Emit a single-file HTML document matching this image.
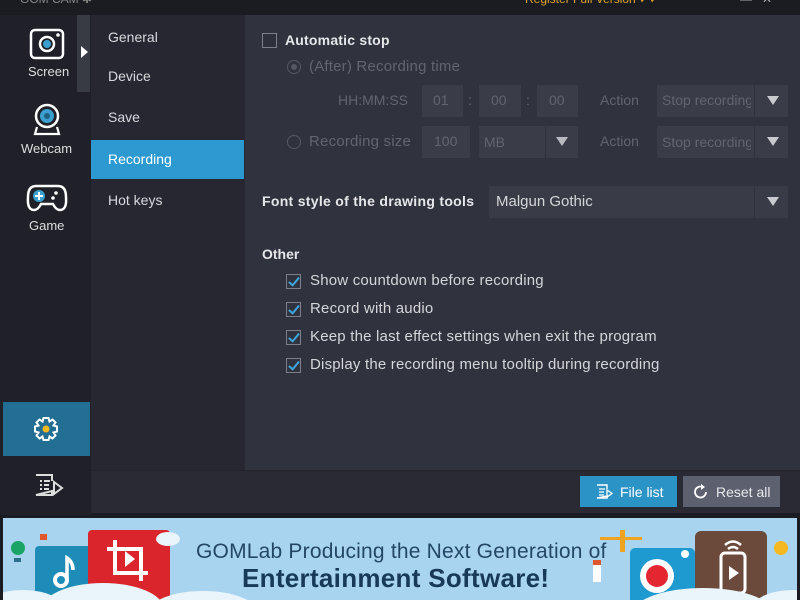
<!DOCTYPE html>
<html style="overflow:hidden"><head><meta charset="utf-8"><style>
*{margin:0;padding:0;box-sizing:border-box}
html,body{width:800px;height:600px;overflow:hidden}
body{background:#1b1c23;font-family:"Liberation Sans",sans-serif;position:relative}
.a{position:absolute}
.t{color:#e6e7ea;font-size:14px;white-space:nowrap}
.dim{color:#62656f}
.box{background:#3a3c47;position:absolute}
.cb{position:absolute;width:15px;height:15px;border:1.5px solid #7d808a;background:#2e303b}
.ck{position:absolute;width:15px;height:15px;border:1.5px solid #7d808a}
.ck::after{content:"";position:absolute;left:4px;top:0px;width:4px;height:9px;border:solid #3da6dd;border-width:0 2.5px 2.5px 0;transform:rotate(40deg)}
.tri{position:absolute;width:0;height:0;border-left:6px solid transparent;border-right:6px solid transparent;border-top:9px solid #c8cad0}
.sep{position:absolute;width:1px;background:#30323c}
.opt{font-size:15px;letter-spacing:0.2px;color:#d5d6da}
</style></head><body>
<div class="a" style="left:0;top:0;width:800px;height:15px;background:#1b1c22;overflow:hidden">
<div class="a t" style="left:20px;top:-8px;font-size:12px;color:#888">GOM CAM ✱</div>
<div class="a t" style="left:525px;top:-8px;font-size:12px;color:#e0a528">Register Full Version ✓✓</div>
<div class="a t" style="left:740px;top:-8px;font-size:12px;color:#aaa">—&nbsp;&nbsp;&nbsp;✕</div>
</div>
<div class="a" style="left:0;top:15px;width:91px;height:500px;background:#1f2028"></div>
<div class="a" style="left:77px;top:15px;width:13px;height:77px;background:#383a44"></div>
<div class="a" style="left:81px;top:46px;width:0;height:0;border-top:6px solid transparent;border-bottom:6px solid transparent;border-left:7px solid #fff"></div>
<svg class="a" style="left:29px;top:28px" width="36" height="32"><rect x="2" y="2" width="32" height="28" rx="4" fill="none" stroke="#fff" stroke-width="2.5"/><circle cx="18" cy="16" r="7" fill="none" stroke="#fff" stroke-width="2.5"/><circle cx="18" cy="16" r="4" fill="#3ba0d0"/><circle cx="29" cy="7" r="1.8" fill="#fff"/></svg>
<div class="a t" style="left:28px;top:64px;font-size:13px;color:#ddd">Screen</div>
<svg class="a" style="left:31px;top:103px" width="32" height="34"><circle cx="16" cy="13" r="11" fill="none" stroke="#fff" stroke-width="2.5"/><circle cx="16" cy="13" r="7" fill="#3ba0d0"/><circle cx="16" cy="13" r="3" fill="#1f5f80"/><path d="M6 24 L4 31 H28 L26 24" fill="none" stroke="#fff" stroke-width="2.2"/></svg>
<div class="a t" style="left:21px;top:141px;font-size:13px;color:#ddd">Webcam</div>
<svg class="a" style="left:26px;top:183px" width="42" height="30"><path d="M10 3 H32 Q40 3 40 14 Q41 27 34 27 Q30 27 27 21 H15 Q12 27 8 27 Q1 27 2 14 Q2 3 10 3Z" fill="none" stroke="#fff" stroke-width="2.5"/><circle cx="13" cy="13" r="6" fill="#3ba0d0"/><path d="M13 9v8M9 13h8" stroke="#fff" stroke-width="2"/><circle cx="30" cy="10" r="1.8" fill="#fff"/><circle cx="27" cy="15" r="1.8" fill="#fff"/></svg>
<div class="a t" style="left:29px;top:218px;font-size:13px;color:#ddd">Game</div>
<div class="a" style="left:3px;top:402px;width:87px;height:54px;background:#236f94"></div>
<svg class="a" style="left:33px;top:416px" width="26" height="26"><g transform="translate(13 13)" fill="none" stroke="#fff" stroke-width="2"><path d="M-2.5 -11 H2.5 L3.5 -7.5 L6.5 -9.5 L9.5 -6.5 L7.5 -3.5 L11 -2.5 V2.5 L7.5 3.5 L9.5 6.5 L6.5 9.5 L3.5 7.5 L2.5 11 H-2.5 L-3.5 7.5 L-6.5 9.5 L-9.5 6.5 L-7.5 3.5 L-11 2.5 V-2.5 L-7.5 -3.5 L-9.5 -6.5 L-6.5 -9.5 L-3.5 -7.5Z"/></g><circle cx="13" cy="13" r="3.5" fill="#f5b820"/></svg>
<svg class="a" style="left:34px;top:473px" width="30" height="24"><path d="M2 2 H18 V8 M18 18 V22 H2Z" fill="none" stroke="#ddd" stroke-width="2"/><path d="M6 8h2M10 8h6M6 12h2M10 12h5M6 16h2M10 16h5" stroke="#ddd" stroke-width="2"/><path d="M20 9 L28 15 L20 21Z" fill="none" stroke="#ddd" stroke-width="2"/></svg>
<div class="a" style="left:91px;top:15px;width:154px;height:455px;background:#262731"></div>
<div class="a t" style="left:108px;top:29px;color:#d8d9dc">General</div>
<div class="a t" style="left:108px;top:68px;color:#d8d9dc">Device</div>
<div class="a t" style="left:108px;top:109px;color:#d8d9dc">Save</div>
<div class="a" style="left:91px;top:140px;width:153px;height:39px;background:#2c9ad0"></div>
<div class="a t" style="left:108px;top:151px;color:#fff">Recording</div>
<div class="a t" style="left:108px;top:192px;color:#d8d9dc">Hot keys</div>
<div class="a" style="left:245px;top:15px;width:555px;height:455px;background:#30323e"></div>
<div class="a" style="left:91px;top:470px;width:709px;height:43px;background:#292a34;border-top:1px solid #22232b"></div>
<div class="cb" style="left:262px;top:33px"></div>
<div class="a t" style="left:285px;top:32px;font-weight:bold;font-size:14px;letter-spacing:0.2px">Automatic stop</div>
<div class="a" style="left:287px;top:60px;width:14px;height:14px;border:1.5px solid #555864;border-radius:50%"><div style="margin:2.5px;width:6px;height:6px;border-radius:50%;background:#555864"></div></div>
<div class="a t dim opt" style="left:309px;top:58px;color:#62656f">(After) Recording time</div>
<div class="a t dim" style="left:338px;top:92px">HH:MM:SS</div>
<div class="box" style="left:422px;top:85px;width:41px;height:32px"></div><div class="a t dim" style="left:433px;top:92px">01</div>
<div class="a t dim" style="left:468px;top:92px">:</div>
<div class="box" style="left:479px;top:85px;width:42px;height:32px"></div><div class="a t dim" style="left:491px;top:92px">00</div>
<div class="a t dim" style="left:526px;top:92px">:</div>
<div class="box" style="left:537px;top:85px;width:41px;height:32px"></div><div class="a t dim" style="left:549px;top:92px">00</div>
<div class="a t dim" style="left:600px;top:92px">Action</div>
<div class="box" style="left:657px;top:85px;width:131px;height:32px"></div><div class="sep" style="left:754px;top:85px;height:32px"></div>
<div class="a t dim" style="left:662px;top:92px;width:89px;overflow:hidden">Stop recording</div>
<div class="tri" style="left:767px;top:96px"></div>
<div class="a" style="left:287px;top:135px;width:14px;height:14px;border:1.5px solid #555864;border-radius:50%"></div>
<div class="a t dim opt" style="left:309px;top:133px;color:#62656f">Recording size</div>
<div class="box" style="left:422px;top:126px;width:48px;height:32px"></div><div class="a t dim" style="left:434px;top:133px">100</div>
<div class="box" style="left:479px;top:126px;width:99px;height:32px"></div><div class="sep" style="left:545px;top:126px;height:32px"></div><div class="a t dim" style="left:484px;top:134px">MB</div><div class="tri" style="left:556px;top:137px;border-top-color:#b8bac0"></div>
<div class="a t dim" style="left:600px;top:133px">Action</div>
<div class="box" style="left:657px;top:126px;width:131px;height:32px"></div><div class="sep" style="left:754px;top:126px;height:32px"></div>
<div class="a t dim" style="left:662px;top:134px;width:89px;overflow:hidden">Stop recording</div>
<div class="tri" style="left:767px;top:137px"></div>
<div class="a t" style="left:262px;top:193px;font-weight:bold;letter-spacing:0.3px">Font style of the drawing tools</div>
<div class="a" style="left:489px;top:186px;width:299px;height:32px;background:#393b46"></div><div class="sep" style="left:754px;top:186px;height:32px"></div>
<div class="a t" style="left:496px;top:193px;color:#d5d6da;font-size:15px">Malgun Gothic</div>
<div class="tri" style="left:767px;top:197px"></div>
<div class="a t" style="left:262px;top:246px;font-weight:bold">Other</div>
<div class="ck" style="left:286px;top:274px"></div><div class="a t opt" style="left:310px;top:272px">Show countdown before recording</div>
<div class="ck" style="left:286px;top:302px"></div><div class="a t opt" style="left:310px;top:300px">Record with audio</div>
<div class="ck" style="left:286px;top:330px"></div><div class="a t opt" style="left:310px;top:328px">Keep the last effect settings when exit the program</div>
<div class="ck" style="left:286px;top:358px"></div><div class="a t opt" style="left:310px;top:356px">Display the recording menu tooltip during recording</div>
<div class="a" style="left:580px;top:476px;width:97px;height:31px;background:#2c93c6"></div>
<svg class="a" style="left:596px;top:484px" width="18" height="16"><path d="M1 1H11V5M11 12V14H1Z" fill="none" stroke="#fff" stroke-width="1.4"/><path d="M3 5h6M3 8h5M3 11h5" stroke="#fff" stroke-width="1.3"/><path d="M11 6L16 9.5L11 13Z" fill="none" stroke="#fff" stroke-width="1.3"/></svg>
<div class="a t" style="left:620px;top:484px;color:#fff">File list</div>
<div class="a" style="left:683px;top:476px;width:97px;height:31px;background:#5d606e"></div>
<svg class="a" style="left:693px;top:484px" width="16" height="16"><path d="M13 8A5.5 5.5 0 1 1 9 2.7" fill="none" stroke="#fff" stroke-width="1.8"/><path d="M8 0L12 3L8 6Z" fill="#fff"/></svg>
<div class="a t" style="left:716px;top:484px;color:#e8e8ea">Reset all</div>
<div class="a" style="left:3px;top:518px;width:794px;height:82px;background:#a9d4ef;overflow:hidden">
<svg class="a" style="left:0;top:0" width="794" height="82">
<circle cx="15" cy="30" r="7" fill="#1aa566"/><rect x="11" y="40" width="7" height="4" fill="#2a6f8a"/><rect x="37" y="16" width="7" height="6" fill="#e0572d"/>
<rect x="32" y="28" width="60" height="60" rx="4" fill="#1d8db8"/><circle cx="58" cy="62" r="6" fill="none" stroke="#fff" stroke-width="4"/><path d="M64 62V40Q70 44 70 52" fill="none" stroke="#fff" stroke-width="3.5"/>
<rect x="85" y="12" width="82" height="80" rx="4" fill="#d9252b"/><path d="M112 22V55H145M104 31H138V63" fill="none" stroke="#fff" stroke-width="4"/><path d="M122 33L132 41L122 49Z" fill="#fff"/>
<ellipse cx="165" cy="21" rx="12" ry="7" fill="#e9f4fb"/>
<ellipse cx="100" cy="90" rx="60" ry="25" fill="#e9f4fb"/><ellipse cx="200" cy="95" rx="55" ry="22" fill="#e9f4fb"/><ellipse cx="20" cy="90" rx="40" ry="18" fill="#e9f4fb"/>
<rect x="597" y="19" width="42" height="3" fill="#f0a31e"/><rect x="617" y="12" width="5" height="22" fill="#f0a31e"/>
<rect x="627" y="30" width="65" height="62" rx="5" fill="#1e9ad0"/><circle cx="654" cy="58" r="17" fill="#fff"/><circle cx="654" cy="58" r="11" fill="#e32630"/><circle cx="682" cy="36" r="4" fill="#fff"/>
<rect x="692" y="13" width="72" height="80" rx="6" fill="#6b4a3c"/><rect x="718" y="35" width="24" height="40" rx="4" fill="none" stroke="#fff" stroke-width="3"/><path d="M726 48L736 55L726 62Z" fill="#fff"/><path d="M722 27Q730 20 738 27M725 31Q730 27 735 31" fill="none" stroke="#fff" stroke-width="2.5"/>
<circle cx="778" cy="30" r="7" fill="#f5b820"/>
<rect x="590" y="44" width="8" height="20" fill="#fff"/><rect x="590" y="42" width="8" height="5" fill="#e0572d"/>
<ellipse cx="700" cy="95" rx="70" ry="25" fill="#e9f4fb"/><ellipse cx="790" cy="90" rx="40" ry="18" fill="#e9f4fb"/>
</svg>
<div class="a" style="left:193px;top:22px;font-size:21px;color:#234866;white-space:nowrap;letter-spacing:0.2px">GOMLab Producing the Next Generation of</div>
<div class="a" style="left:239px;top:45px;font-size:26px;font-weight:bold;color:#163a58;white-space:nowrap;letter-spacing:0.3px">Entertainment Software!</div>
</div>
</body></html>
